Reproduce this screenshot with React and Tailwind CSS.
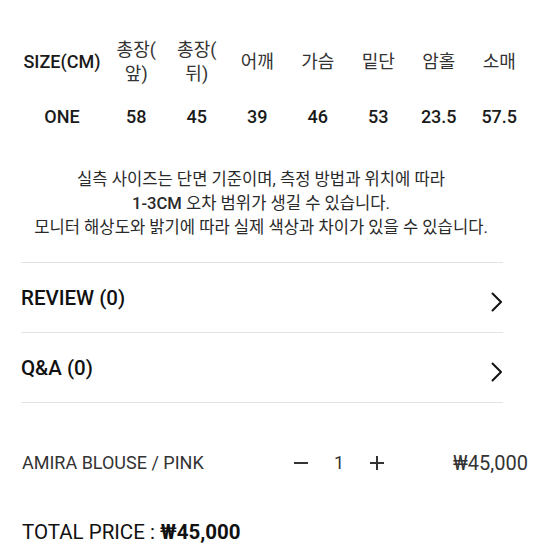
const headers = [
  { label: "SIZE(CM)", latin: true },
  { label: ["총장(", "앞)"] },
  { label: ["총장(", "뒤)"] },
  { label: "어깨" },
  { label: "가슴" },
  { label: "밑단" },
  { label: "암홀" },
  { label: "소매" },
];

const values = ["ONE", "58", "45", "39", "46", "53", "23.5", "57.5"];

function Chevron() {
  return (
    <svg width="12" height="20" viewBox="0 0 12 20" fill="none" className="shrink-0">
      <polyline
        points="1.5,1.5 10,10 1.5,18.5"
        stroke="#111"
        strokeWidth="2"
        strokeLinecap="round"
        strokeLinejoin="round"
      />
    </svg>
  );
}

function LinkRow({ label }) {
  return (
    <div className="flex h-[70px] items-center justify-between border-b border-[#e3e3e3]">
      <span className="text-[20.5px] font-medium leading-6 text-[#111]">{label}</span>
      <span className="mt-2">
        <Chevron />
      </span>
    </div>
  );
}

export default function App() {
  return (
    <div className="h-[554px] w-[554px] overflow-hidden bg-white font-[Roboto,'Noto_Sans_CJK_KR',sans-serif] text-[#222]">
      {/* size table */}
      <div className="ml-[18px] mt-[38px] grid grid-cols-[88px_repeat(7,60.5px)] items-center gap-y-[19px] text-center text-[18px] leading-6">
        {headers.map((h, i) => (
          <div
            key={i}
            className={h.latin ? "font-medium text-[#1a1a1a]" : "font-normal text-[#333]"}
          >
            {Array.isArray(h.label) ? (
              <>
                {h.label[0]}
                <br />
                {h.label[1]}
              </>
            ) : (
              h.label
            )}
          </div>
        ))}
        {values.map((v, i) => (
          <div key={i} className="font-medium text-[#1a1a1a]">
            {v}
          </div>
        ))}
      </div>

      {/* notice */}
      <div className="mt-[39px] pr-[32px] text-center text-[16.6px] leading-6 text-[#2a2a2a]">
        <p>실측 사이즈는 단면 기준이며, 측정 방법과 위치에 따라</p>
        <p>
          <span className="font-medium">1-3CM</span> 오차 범위가 생길 수 있습니다.
        </p>
        <p>모니터 해상도와 밝기에 따라 실제 색상과 차이가 있을 수 있습니다.</p>
      </div>

      {/* review / qna */}
      <div className="ml-[21px] mt-[22px] w-[482px] border-t border-[#e3e3e3]">
        <LinkRow label="REVIEW (0)" />
        <LinkRow label="Q&A (0)" />
      </div>

      {/* selected option */}
      <div className="mt-[48px] flex items-center pl-[22px] pr-[26px] leading-6">
        <span className="flex-1 text-[18px] text-[#333]">AMIRA BLOUSE / PINK</span>
        <div className="mr-[69px] flex items-center text-[#333]">
          <button type="button" aria-label="decrease" className="flex h-6 w-[14px] items-center">
            <span className="block h-[2px] w-[14px] bg-[#333]" />
          </button>
          <span className="mx-[26px] text-[18px]">1</span>
          <button type="button" aria-label="increase" className="relative h-6 w-[14px]">
            <span className="absolute left-0 top-[11px] block h-[2px] w-[14px] bg-[#333]" />
            <span className="absolute left-[6px] top-[5px] block h-[14px] w-[2px] bg-[#333]" />
          </button>
        </div>
        <span className="text-[20px] text-[#333]">₩45,000</span>
      </div>

      {/* total */}
      <div className="mt-[45px] pl-[22px] text-[20.5px] leading-6 text-[#111]">
        TOTAL PRICE : <span className="font-bold">₩45,000</span>
      </div>
    </div>
  );
}
